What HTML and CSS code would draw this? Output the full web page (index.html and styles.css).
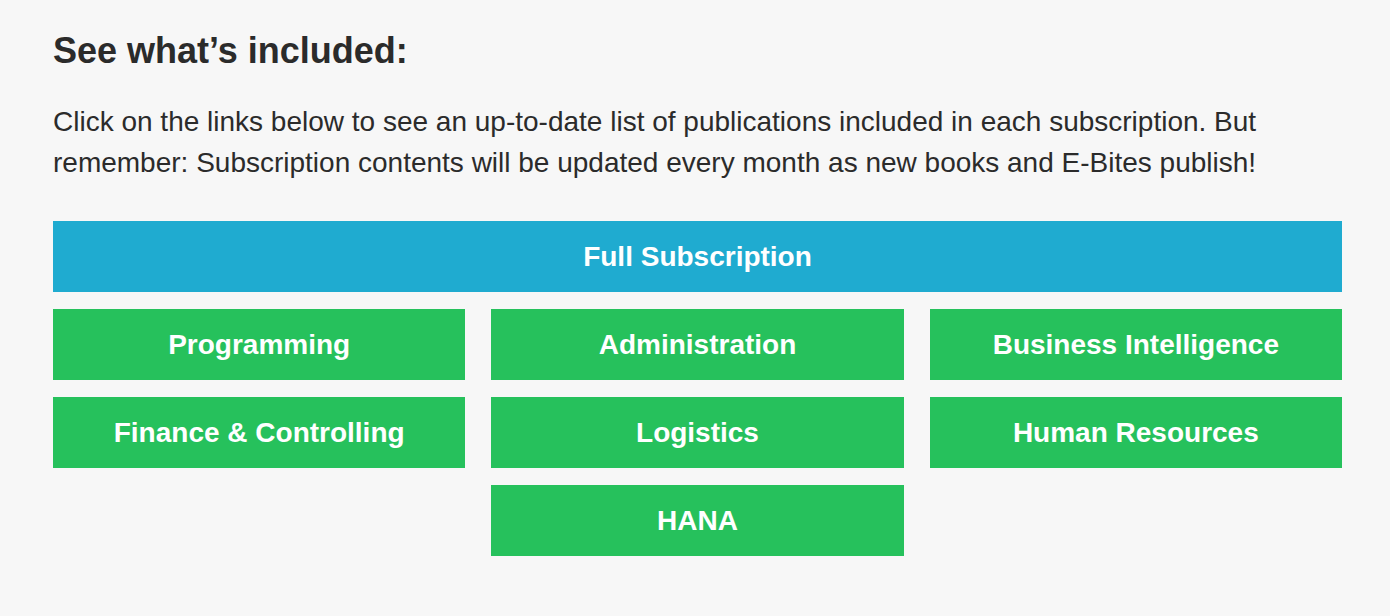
FILE: index.html
```html
<!DOCTYPE html>
<html lang="en">
  <head>
    <meta charset="UTF-8" />
    <meta name="viewport" content="width=device-width, initial-scale=1.0" />
    <title>See what's included</title>
    <link rel="stylesheet" href="styles.css">
  </head>
  <body>
    <div class="wrap">
      <h2>See what’s included:</h2>
      <p class="intro">Click on the links below to see an up-to-date list of publications included in each subscription. But remember: Subscription contents will be updated every month as new books and E-Bites publish!</p>
      <div class="links">
        <a href="#" class="tile full">Full Subscription</a>
        <a href="#" class="tile">Programming</a>
        <a href="#" class="tile">Administration</a>
        <a href="#" class="tile">Business Intelligence</a>
        <a href="#" class="tile">Finance &amp; Controlling</a>
        <a href="#" class="tile">Logistics</a>
        <a href="#" class="tile">Human Resources</a>
        <a href="#" class="tile hana">HANA</a>
      </div>
    </div>
  </body>
</html>
```

FILE: styles.css
```css
body {
  font-family: "Liberation Sans", Arial, Helvetica, sans-serif;
  background-color: #f7f7f7;
  color: #2b2b2b;
  margin: 0;
}
.wrap {
  width: 1289px;
  margin-left: 53px;
}
h2 {
  font-size: 36px;
  line-height: 44px;
  font-weight: bold;
  margin: 29px 0 28px;
}
.intro {
  font-size: 28px;
  line-height: 41px;
  margin: 0 0 38px;
}
.links {
  display: grid;
  grid-template-columns: repeat(3, 1fr);
  column-gap: 26px;
  row-gap: 17px;
}
.tile {
  display: flex;
  align-items: center;
  justify-content: center;
  height: 71px;
  background-color: #26c15c;
  color: #fff;
  font-size: 28px;
  font-weight: bold;
  text-decoration: none;
}
.full {
  grid-column: 1 / 4;
  background-color: #1fabd0;
}
.hana {
  grid-column: 2;
}
```
